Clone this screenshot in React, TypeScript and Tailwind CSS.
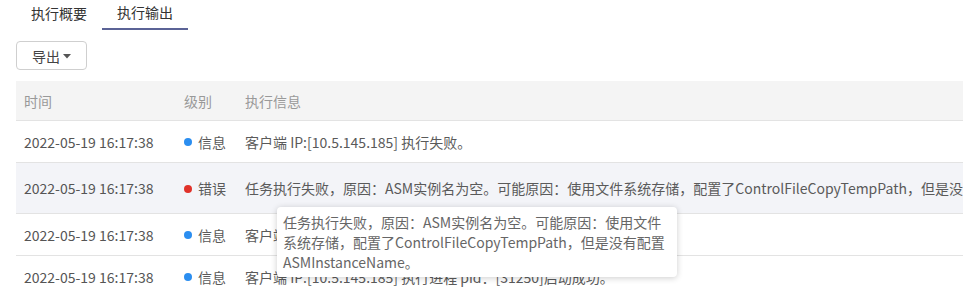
import React from 'react';

type Row = { time: string; level: 'info' | 'error'; msg: string; h: string; bg?: string };

const rows: Row[] = [
  { time: '2022-05-19 16:17:38', level: 'info', msg: '客户端 IP:[10.5.145.185] 执行失败。', h: 'h-[42px]' },
  {
    time: '2022-05-19 16:17:38',
    level: 'error',
    msg: '任务执行失败，原因：ASM实例名为空。可能原因：使用文件系统存储，配置了ControlFileCopyTempPath，但是没有配置ASMInstanceName。',
    h: 'h-[51px]',
    bg: 'bg-[#f3f4f8]',
  },
  { time: '2022-05-19 16:17:38', level: 'info', msg: '客户端 IP:[10.5.145.185] 开始执行任务。', h: 'h-[42px]' },
  { time: '2022-05-19 16:17:38', level: 'info', msg: '客户端 IP:[10.5.145.185] 执行进程 pid：[31250]启动成功。', h: 'h-[42px]' },
];

function Level({ level }: { level: Row['level'] }) {
  return (
    <div className="flex items-center gap-[6px]">
      <span className={`w-2 h-2 rounded-full ${level === 'info' ? 'bg-[#2b8ef0]' : 'bg-[#e0322a]'}`} />
      <span>{level === 'info' ? '信息' : '错误'}</span>
    </div>
  );
}

export default function App() {
  return (
    <div
      className="relative w-[963px] h-[295px] overflow-hidden bg-white text-[14px] text-[#5a5a5a]"
      style={{ fontFamily: '"Noto Sans CJK SC", "Noto Sans", sans-serif' }}
    >
      {/* tabs */}
      <div className="flex pl-4 h-[30px]">
        <div className="px-[15px] flex items-center h-full pb-[4px] text-[#333]">执行概要</div>
        <div className="px-[15px] flex items-center h-full pb-[4px] text-[#333] border-b-2 border-[#5b6396]">
          执行输出
        </div>
      </div>

      {/* export */}
      <div className="pl-4 mt-[11px]">
        <button className="h-[29px] w-[71px] pt-[1px] border border-[#cfcfcf] rounded-[4px] flex items-center justify-center gap-[3px] text-[#444]">
          导出
          <svg width="8" height="5" viewBox="0 0 8 5">
            <path d="M0 0h8L4 4.5z" fill="#555" />
          </svg>
        </button>
      </div>

      {/* table */}
      <div className="ml-4 mt-[11px] w-[1400px]">
        <div className="flex items-center h-[40px] pt-[1px] bg-[#f4f4f4] text-[#999] border-b border-[#e3e3e3]">
          <div className="w-[160px] pl-2">时间</div>
          <div className="w-[61px] pl-2">级别</div>
          <div className="pl-2">执行信息</div>
        </div>
        {rows.map((r, i) => (
          <div key={i} className={`flex items-center pt-[1px] border-b border-[#e3e3e3] ${r.h} ${r.bg ?? ''}`}>
            <div className="w-[160px] pl-2 text-[#555]">{r.time}</div>
            <div className="w-[61px] pl-2">
              <Level level={r.level} />
            </div>
            <div className="pl-2 whitespace-nowrap">{r.msg}</div>
          </div>
        ))}
      </div>

      {/* tooltip */}
      <div className="absolute left-[277px] top-[207px] w-[400px] bg-white rounded-[4px] shadow-[0_1px_6px_rgba(0,0,0,0.2)] px-[6px] py-[5px] leading-[20px] text-[#666]">
        任务执行失败，原因：ASM实例名为空。可能原因：使用文件系统存储，配置了ControlFileCopyTempPath，但是没有配置ASMInstanceName。
      </div>
    </div>
  );
}
